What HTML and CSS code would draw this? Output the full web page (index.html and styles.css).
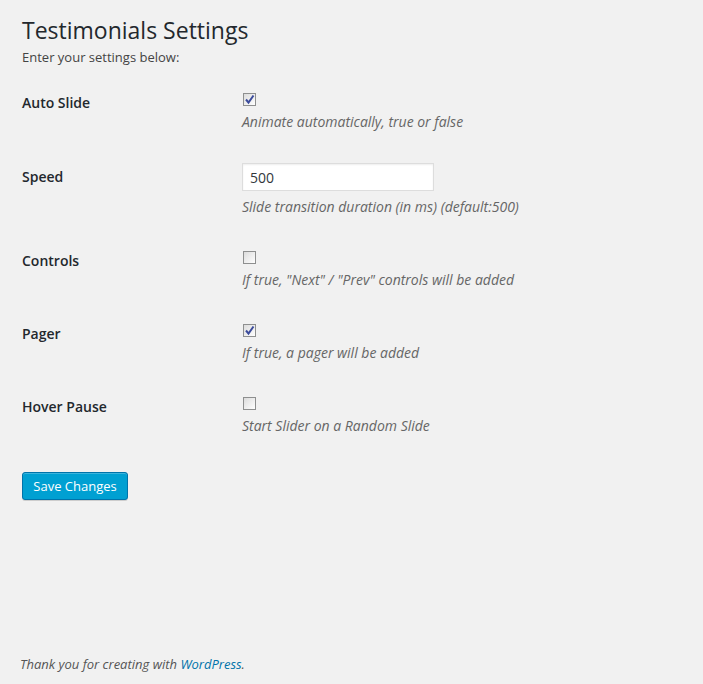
FILE: index.html
```html
<!DOCTYPE html>
<html>
<head>
<meta charset="utf-8">
<title>Testimonials Settings</title>
<link rel="stylesheet" href="styles.css">
</head>
<body>
<div class="page">
  <div class="wrap">
    <h1 class="title">Testimonials Settings</h1>
    <p class="intro">Enter your settings below:</p>
    <form class="form">
      <div class="row">
        <div class="label">Auto Slide</div>
        <div class="field">
          <span class="check checked"><svg width="11" height="11" viewBox="0 0 11 11"><path d="M2 5.5 L4.5 8.5 L9.5 1.5" fill="none" stroke="#3b4b9b" stroke-width="2"/></svg></span>
          <p class="desc">Animate automatically, true or false</p>
        </div>
      </div>
      <div class="row row-input">
        <div class="label">Speed</div>
        <div class="field">
          <input class="text" type="text" value="500">
          <p class="desc">Slide transition duration (in ms) (default:500)</p>
        </div>
      </div>
      <div class="row">
        <div class="label">Controls</div>
        <div class="field">
          <span class="check"></span>
          <p class="desc">If true, "Next" / "Prev" controls will be added</p>
        </div>
      </div>
      <div class="row">
        <div class="label">Pager</div>
        <div class="field">
          <span class="check checked"><svg width="11" height="11" viewBox="0 0 11 11"><path d="M2 5.5 L4.5 8.5 L9.5 1.5" fill="none" stroke="#3b4b9b" stroke-width="2"/></svg></span>
          <p class="desc">If true, a pager will be added</p>
        </div>
      </div>
      <div class="row">
        <div class="label">Hover Pause</div>
        <div class="field">
          <span class="check"></span>
          <p class="desc">Start Slider on a Random Slide</p>
        </div>
      </div>
      <button class="button" type="button">Save Changes</button>
    </form>
  </div>
  <div class="footer">
    <p>Thank you for creating with <a href="#">WordPress</a>.</p>
  </div>
</div>
</body>
</html>
```
FILE: styles.css
```css
html, body {
  margin: 0;
  padding: 0;
  background: #f1f1f1;
}
body {
  font-family: "Open Sans", "Liberation Sans", sans-serif;
  font-size: 13px;
  line-height: 20px;
  color: #444;
}
.page {
  min-height: 684px;
  display: flex;
  flex-direction: column;
}
.wrap {
  padding: 16px 20px 0 22px;
}
.title {
  margin: 0;
  font-size: 23px;
  font-weight: 400;
  line-height: 29px;
  color: #23282d;
}
.intro {
  margin: 2px 0 0;
  color: #444;
}
.form {
  margin-top: 7px;
}
.row {
  display: grid;
  grid-template-columns: 220px 1fr;
  height: 73px;
}
.row-input {
  height: 85px;
}
.label {
  padding-top: 19px;
  font-size: 14px;
  font-weight: 600;
  line-height: 20px;
  color: #23282d;
}
.field {
  padding-top: 19px;
  display: flex;
  flex-direction: column;
  align-items: flex-start;
}
.row-input .field {
  padding-top: 16px;
}
.row-input .label {
  padding-top: 20px;
}
.check {
  box-sizing: border-box;
  width: 13px;
  height: 13px;
  margin-left: 1px;
  border: 1px solid #8e8f8f;
  background: linear-gradient(135deg, #dcdcdc 0%, #f4f4f4 70%, #ffffff 100%);
  display: flex;
  align-items: center;
  justify-content: center;
}
.check svg {
  display: block;
}
.desc {
  margin: 6px 0 0;
  font-size: 14px;
  font-style: italic;
  line-height: 20px;
  color: #666;
}
.text {
  box-sizing: border-box;
  width: 192px;
  height: 28px;
  margin: 0;
  padding: 3px 7px;
  border: 1px solid #ddd;
  background: #fff;
  box-shadow: inset 0 1px 2px rgba(0, 0, 0, 0.07);
  font-family: "Open Sans", "Liberation Sans", sans-serif;
  font-size: 14px;
  color: #32373c;
  outline: none;
}
.row-input .desc {
  margin-top: 6px;
}
.button {
  box-sizing: border-box;
  width: 106px;
  margin-top: 21px;
  height: 28px;
  padding: 0 0 1px;
  border: 1px solid #0073aa;
  border-radius: 3px;
  background: #00a0d2;
  box-shadow: inset 0 1px 0 rgba(120, 200, 230, 0.5), 0 1px 0 rgba(0, 0, 0, 0.15);
  color: #fff;
  font-family: "Open Sans", "Liberation Sans", sans-serif;
  font-size: 13px;
  line-height: 26px;
  cursor: pointer;
}
.footer {
  margin-top: auto;
  padding: 10px 20px;
}
.footer p {
  margin: 0;
  font-style: italic;
  color: #555;
}
.footer a {
  color: #0073aa;
  text-decoration: none;
}
```
